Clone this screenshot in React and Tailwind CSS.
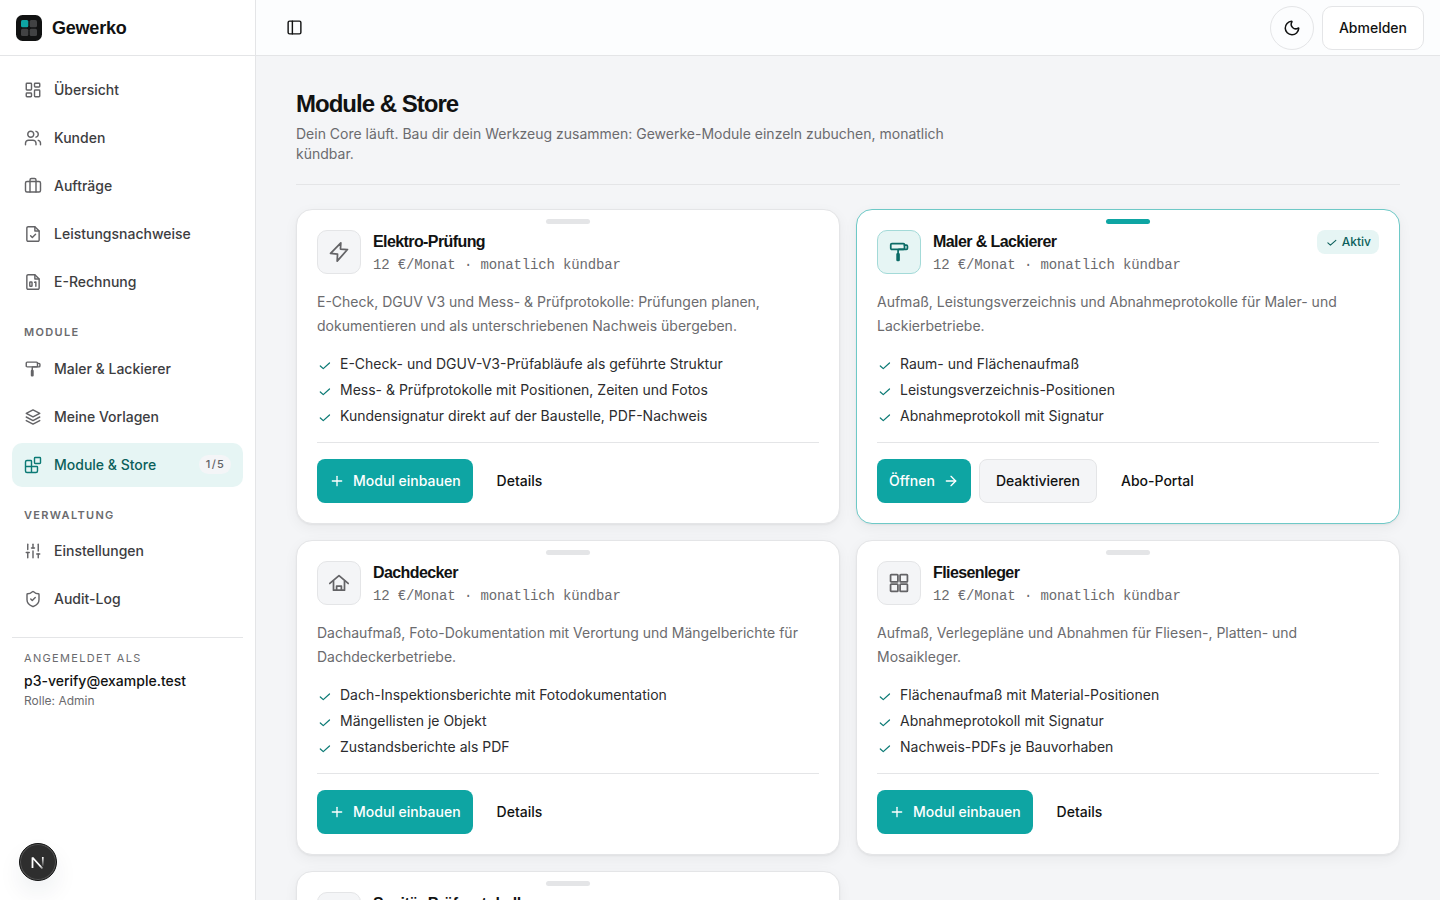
import React from 'react';
import { ArrowRight, Blocks, Briefcase, LayoutDashboard, Moon, PanelLeft, Plus, ShieldCheck, SlidersVertical, Users } from 'lucide-react';

const Svg = ({ size = 18, strokeWidth = 2, className = '', children }) => (
    <svg width={size} height={size} viewBox="0 0 24 24" fill="none" stroke="currentColor" strokeWidth={strokeWidth} strokeLinecap="round" strokeLinejoin="round" className={className}>
        {children}
    </svg>
);

const CheckIcon = (props) => (
    <Svg {...props}>
        <path d="M5.3 12.8 10 17 20 8" />
    </Svg>
);

const BoltIcon = (props) => (
    <Svg {...props}>
        <path d="M14 2 2.800 13.600l7.600.700L10 22 21.200 9.300l-7.600-.500z" />
    </Svg>
);

const LayersIcon = (props) => (
    <Svg {...props}>
        <path d="m12 2.500 9 4.700-9 4.700-9-4.700z" />
        <path d="m3 12 9 4.700 9-4.700" />
        <path d="m3 16.800 9 4.700 9-4.700" />
    </Svg>
);

const RollerIcon = (props) => (
    <Svg {...props}>
        <rect x="3" y="2.800" width="15" height="6.400" rx="1.300" />
        <path d="M18 4.500h2a1.200 1.200 0 0 1 1.200 1.200V8A1.200 1.200 0 0 1 20 9.200h-8a1 1 0 0 0-1 1V14" />
        <rect x="10" y="14" width="2" height="7.200" rx="0.500" fill="currentColor" />
    </Svg>
);

const FileBase = ({ children, ...props }) => (
    <Svg {...props}>
        <path d="M14.500 2.300H5.500a1.700 1.700 0 0 0-1.700 1.700v16a1.700 1.700 0 0 0 1.700 1.700h13a1.700 1.700 0 0 0 1.700-1.700V8z" />
        <path d="M14.500 2.500V8H20" />
        {children}
    </Svg>
);

const FileCheckIcon = (props) => (
    <FileBase {...props}>
        <path d="m8.800 14.300 2.300 2.300 4.300-4.300" />
    </FileBase>
);

const InvoiceIcon = (props) => (
    <FileBase {...props}>
        <rect x="7.700" y="12" width="3" height="5.600" rx="0.700" />
        <path d="M14.200 12.400 15.800 12v5.800" />
    </FileBase>
);

const HouseIcon = (props) => (
    <Svg {...props}>
        <path d="M2 12.500 12 4l10 8.500" />
        <path d="M6 10v9.800h12V10" />
        <path d="M9.400 19.500v-4.200h5.200v4.200" />
    </Svg>
);

const TilesIcon = (props) => (
    <Svg {...props}>
        <rect x="2.800" y="2.800" width="8" height="8" rx="0.800" />
        <rect x="13.200" y="2.800" width="8" height="8" rx="0.800" />
        <rect x="2.800" y="13.200" width="8" height="8" rx="0.800" />
        <rect x="13.200" y="13.200" width="8" height="8" rx="0.800" />
    </Svg>
);

const DropIcon = (props) => (
    <Svg {...props}>
        <path d="M12 2.500S5 9 5 15a7 7 0 0 0 14 0c0-6-7-12.500-7-12.500z" />
    </Svg>
);

const mainNav = [
    { label: 'Übersicht', icon: LayoutDashboard },
    { label: 'Kunden', icon: Users },
    { label: 'Aufträge', icon: Briefcase },
    { label: 'Leistungsnachweise', icon: FileCheckIcon },
    { label: 'E-Rechnung', icon: InvoiceIcon },
];

const moduleNav = [
    { label: 'Maler & Lackierer', icon: RollerIcon },
    { label: 'Meine Vorlagen', icon: LayersIcon },
    { label: 'Module & Store', icon: Blocks, badge: '1/5', active: true },
];

const adminNav = [
    { label: 'Einstellungen', icon: SlidersVertical },
    { label: 'Audit-Log', icon: ShieldCheck },
];

const modules = [
    {
        name: 'Elektro-Prüfung',
        icon: BoltIcon,
        description: 'E-Check, DGUV V3 und Mess- & Prüfprotokolle: Prüfungen planen, dokumentieren und als unterschriebenen Nachweis übergeben.',
        features: ['E-Check- und DGUV-V3-Prüfabläufe als geführte Struktur', 'Mess- & Prüfprotokolle mit Positionen, Zeiten und Fotos', 'Kundensignatur direkt auf der Baustelle, PDF-Nachweis'],
    },
    {
        name: 'Maler & Lackierer',
        icon: RollerIcon,
        active: true,
        description: 'Aufmaß, Leistungsverzeichnis und Abnahmeprotokolle für Maler- und Lackierbetriebe.',
        features: ['Raum- und Flächenaufmaß', 'Leistungsverzeichnis-Positionen', 'Abnahmeprotokoll mit Signatur'],
    },
    {
        name: 'Dachdecker',
        icon: HouseIcon,
        description: 'Dachaufmaß, Foto-Dokumentation mit Verortung und Mängelberichte für Dachdeckerbetriebe.',
        features: ['Dach-Inspektionsberichte mit Fotodokumentation', 'Mängellisten je Objekt', 'Zustandsberichte als PDF'],
    },
    {
        name: 'Fliesenleger',
        icon: TilesIcon,
        description: 'Aufmaß, Verlegepläne und Abnahmen für Fliesen-, Platten- und Mosaikleger.',
        features: ['Flächenaufmaß mit Material-Positionen', 'Abnahmeprotokoll mit Signatur', 'Nachweis-PDFs je Bauvorhaben'],
    },
    {
        name: 'Sanitär-Prüfprotokolle',
        icon: DropIcon,
    },
];

const NavItem = ({ label, icon: Icon, badge, active }) => (
    <a className={`flex h-11 items-center gap-3 rounded-[10px] px-3 text-sm font-medium ${active ? 'bg-[#e6f5f4] text-[#0b5f5b]' : 'text-[#3d3d3f]'}`}>
        <Icon size={18} strokeWidth={1.9} className={`shrink-0 ${active ? 'text-[#0b7a75]' : 'text-[#636366]'}`} />
        <span>{label}</span>
        {badge && <span className="ml-auto flex h-[19px] w-8 items-center justify-center rounded-full bg-[#f4f5f7] pl-px text-[11px] font-medium tracking-[0.12em] text-[#636366]">{badge}</span>}
    </a>
);

const NavSection = ({ title, items }) => (
    <>
        {title && <h2 className="px-3 pt-5 pb-1.5 text-[11px] leading-[16.5px] font-semibold tracking-[0.12em] text-[#6b6b6e] uppercase">{title}</h2>}
        <nav className="flex flex-col gap-1">
            {items.map((item) => (
                <NavItem key={item.label} {...item} />
            ))}
        </nav>
    </>
);

const Sidebar = () => (
    <aside className="flex w-64 shrink-0 flex-col border-r border-[#e4e5e7] bg-white">
        <div className="flex h-14 shrink-0 items-center gap-2.5 border-b border-[#e4e5e7] px-4">
            <svg width="26" height="26" viewBox="0 0 26 26">
                <rect width="26" height="26" rx="6.500" fill="#111212" />
                <rect x="5" y="5" width="7.300" height="7.300" rx="1.500" fill="#0ea5a3" />
                <rect x="13.700" y="5" width="7.300" height="7.300" rx="1.500" fill="#414243" />
                <rect x="5" y="13.700" width="7.300" height="7.300" rx="1.500" fill="#414243" />
                <rect x="13.700" y="13.700" width="7.300" height="7.300" rx="1.500" fill="#414243" />
            </svg>
            <span className="font-['Liberation_Sans',sans-serif] text-lg font-bold tracking-[-0.012em] text-[#111212]">Gewerko</span>
        </div>
        <div className="p-3">
            <NavSection items={mainNav} />
            <NavSection title="Module" items={moduleNav} />
            <NavSection title="Verwaltung" items={adminNav} />
            <div className="mt-4 border-t border-[#e4e5e7] px-3 pt-3">
                <p className="text-[11px] leading-[16.5px] tracking-[0.12em] text-[#6b6b6e] uppercase">Angemeldet als</p>
                <p className="mt-1 text-sm font-medium text-[#111212]">p3-verify@example.test</p>
                <p className="mt-0.5 text-xs text-[#6b6b6e]">Rolle: Admin</p>
            </div>
        </div>
    </aside>
);

const ModuleCard = ({ name, icon: Icon, description, features, active }) => (
    <article className={`relative rounded-2xl border bg-white p-5 shadow-[0_1px_2px_rgba(16,18,20,0.05),0_4px_14px_rgba(16,18,20,0.05)] ${active ? 'border-[#6ec9c7]' : 'border-[#e4e5e7]'}`}>
        <span className={`absolute top-[9px] left-1/2 h-[5px] w-11 -translate-x-1/2 rounded-full ${active ? 'bg-[#0ea5a3]' : 'bg-[#e4e5e7]'}`} />
        <div className="flex items-start gap-3">
            <div className={`flex size-11 shrink-0 items-center justify-center rounded-[10px] border ${active ? 'border-[#a3dad8] bg-[#e6f5f4] text-[#0b6b66]' : 'border-[#e4e5e7] bg-[#f4f5f7] text-[#636366]'}`}>
                <Icon size={22} strokeWidth={1.9} />
            </div>
            <div className="flex-1">
                <h3 className="font-['Liberation_Sans',sans-serif] text-base leading-6 font-bold tracking-[-0.037em] text-[#111212]">{name}</h3>
                {description && <p className="mt-px -mb-px font-['Liberation_Mono',monospace] text-sm tracking-[-0.01em] text-[#6b6b6e]">12 €/Monat · monatlich kündbar</p>}
            </div>
            {active && (
                <span className="flex h-6 items-center gap-1 rounded-lg bg-[#e6f5f4] px-2 text-xs font-medium text-[#0b5f5b]">
                    <CheckIcon size={13} />
                    Aktiv
                </span>
            )}
        </div>
        {description && (
            <>
                <p className="mt-4 text-sm leading-6 text-[#6b6b6e]">{description}</p>
                <ul className="mt-4 flex flex-col gap-1.5 text-sm text-[#2c2c2e]">
                    {features.map((feature) => (
                        <li key={feature} className="flex gap-2">
                            <CheckIcon size={15} className="mt-1 shrink-0 text-[#0b7a75]" />
                            {feature}
                        </li>
                    ))}
                </ul>
                <div className="mt-4 flex gap-2 border-t border-[#e4e5e7] pt-4 text-sm font-medium text-[#111212]">
                    {active ? (
                        <>
                            <button className="flex h-11 items-center gap-2 rounded-lg bg-[#0ea5a3] px-3 text-white">
                                Öffnen
                                <ArrowRight size={16} strokeWidth={2} />
                            </button>
                            <button className="h-11 rounded-lg border border-[#e4e5e7] bg-[#f4f5f7] px-4">Deaktivieren</button>
                            <button className="h-11 px-4">Abo-Portal</button>
                        </>
                    ) : (
                        <>
                            <button className="flex h-11 items-center gap-2 rounded-lg bg-[#0ea5a3] px-3 text-white">
                                <Plus size={16} strokeWidth={2} />
                                Modul einbauen
                            </button>
                            <button className="h-11 px-4">Details</button>
                        </>
                    )}
                </div>
            </>
        )}
    </article>
);

const App = () => (
    <div className="flex h-screen overflow-hidden bg-[#f4f5f7] font-['Inter',sans-serif] text-[#111212]">
        <Sidebar />
        <div className="flex min-w-0 flex-1 flex-col">
            <header className="flex h-14 shrink-0 items-center justify-between border-b border-[#e4e5e7] bg-[#fcfdfe] px-4">
                <button className="flex size-11 items-center justify-center">
                    <PanelLeft size={17} strokeWidth={2} />
                </button>
                <div className="flex gap-2">
                    <button className="flex size-11 items-center justify-center rounded-full border border-[#e4e5e7]">
                        <Moon size={18} strokeWidth={2} />
                    </button>
                    <button className="h-11 rounded-[10px] border border-[#e4e5e7] bg-white px-4 text-sm font-medium">Abmelden</button>
                </div>
            </header>
            <main className="min-h-0 flex-1 overflow-hidden px-10 pt-8">
                <div className="border-b border-[#e4e5e7] pb-5">
                    <h1 className="font-['Liberation_Sans',sans-serif] text-2xl font-bold tracking-[-0.041em]">Module & Store</h1>
                    <p className="mt-1 max-w-2xl text-sm text-[#6b6b6e]">Dein Core läuft. Bau dir dein Werkzeug zusammen: Gewerke-Module einzeln zubuchen, monatlich kündbar.</p>
                </div>
                <div className="mt-6 grid grid-cols-2 gap-4">
                    {modules.map((module) => (
                        <ModuleCard key={module.name} {...module} />
                    ))}
                </div>
            </main>
        </div>
        <div className="fixed bottom-[19px] left-[19px] flex size-[38px] items-center justify-center rounded-full border border-[#111212] bg-[#2e2e2e] shadow-[0_0_0_1px_rgba(255,255,255,0.18)_inset,0_12px_24px_rgba(16,40,70,0.07)]">
            <svg width="14" height="14" viewBox="0 0 14 14" fill="none">
                <defs>
                    <linearGradient id="stem" x1="0" y1="2" x2="0" y2="11" gradientUnits="userSpaceOnUse">
                        <stop stopColor="#fff" />
                        <stop offset="1" stopColor="#fff" stopOpacity="0.1" />
                    </linearGradient>
                    <linearGradient id="slash" x1="3" y1="3" x2="12" y2="14" gradientUnits="userSpaceOnUse">
                        <stop offset="0.700" stopColor="#fff" />
                        <stop offset="1" stopColor="#fff" stopOpacity="0.3" />
                    </linearGradient>
                </defs>
                <path d="M1.500 13V2.500L11.500 13.500" stroke="url(#slash)" strokeWidth="1.800" strokeLinejoin="bevel" />
                <path d="M11.800 2v9" stroke="url(#stem)" strokeWidth="1.700" />
            </svg>
        </div>
    </div>
);

export default App;
